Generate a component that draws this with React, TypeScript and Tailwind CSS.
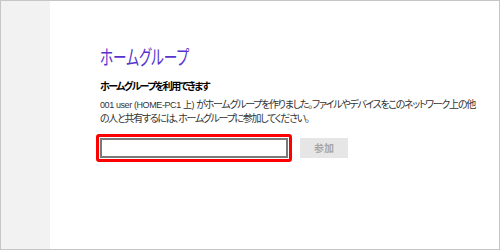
import React from "react";

const jp = "font-['Liberation_Sans','Noto_Sans_CJK_JP',sans-serif] [font-feature-settings:'palt']";

const App = () => {
    return (
        <div className="w-[500px] h-[250px] border border-[#c6c6c6] bg-white flex overflow-hidden">
            <div className="w-[49px] shrink-0 h-full bg-[#f2f2f2]" />
            <div className={`flex-1 min-w-0 pl-[50px] pt-[45px] ${jp}`}>
                <h1 className="inline-block origin-left scale-x-[0.68] text-[20px] leading-[24px] text-[#5533cc] whitespace-nowrap">ホームグループ</h1>
                <div className="mt-[8px] text-[10px] leading-[14px] font-bold text-black tracking-[-1.6px] whitespace-nowrap">ホームグループを利用できます</div>
                <p className="mt-[4px] text-[10px] leading-[13px] text-[#333333] tracking-[-1.3px] whitespace-nowrap">
                    <span className="text-[9px] tracking-[-0.4px]">001 user (HOME-PC1 上) </span>がホームグループを作りました。ファイルやデバイスをこのネットワーク上の他
                    <br />
                    の人と共有するには、ホームグループに参加してください。
                </p>
                <div className="mt-[9px] flex items-center gap-[8px]">
                    <div className="-ml-[4px] border-[3px] border-[#ff0000] rounded-[3px] p-px">
                        <div className="w-[188px] h-[20px] border-2 border-[#7a7a7a] bg-white" />
                    </div>
                    <button className="w-[48px] h-[20px] bg-[#e6e6e6] text-[10px] text-[#a6a6a6] font-bold">参加</button>
                </div>
            </div>
        </div>
    );
};

export default App;
